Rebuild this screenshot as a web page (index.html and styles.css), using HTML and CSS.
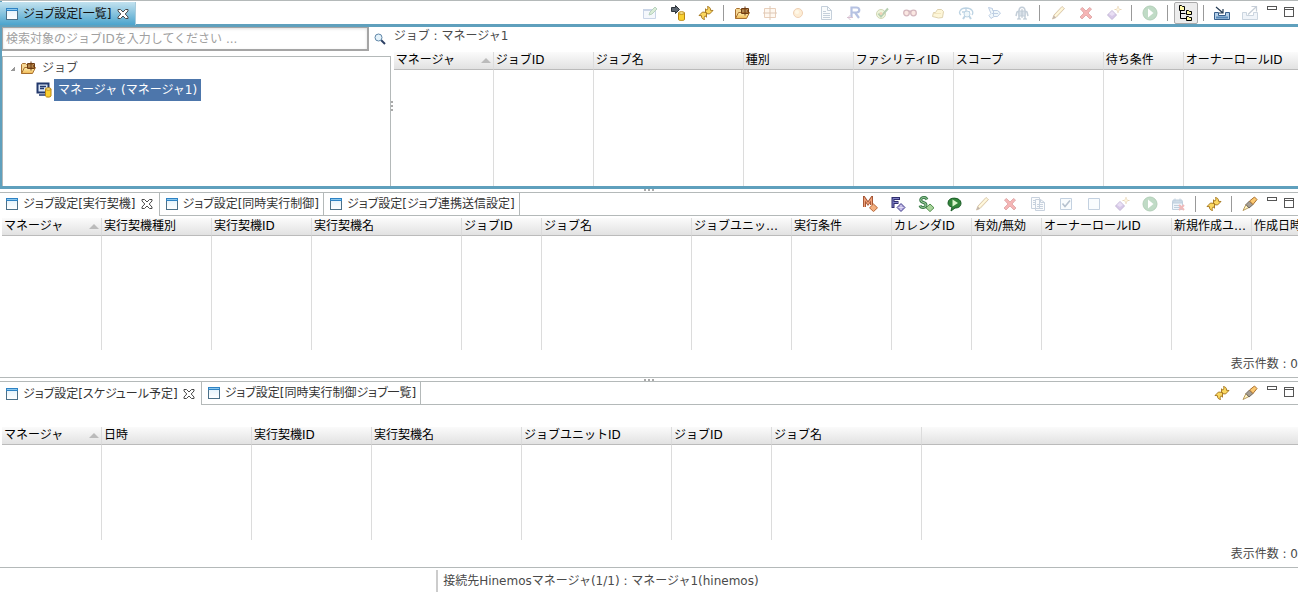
FILE: index.html
```html
<!DOCTYPE html>
<html lang="ja">
<head>
  <meta charset="UTF-8"/>
  <meta name="viewport" content="width=device-width,initial-scale=1.0"/>
  <title>Hinemos ジョブ設定</title>
  <link rel="stylesheet" href="styles.css">
</head>
<body>

  <svg class="sprite" aria-hidden="true">
    <defs>
      <linearGradient id="g-gold" x1="0" y1="0" x2="0" y2="1"><stop offset="0" stop-color="#fff2b8"/><stop offset="1" stop-color="#f0b850"/></linearGradient>
      <linearGradient id="g-win" x1="0" y1="0" x2="0" y2="1"><stop offset="0" stop-color="#dff0fb"/><stop offset="1" stop-color="#fff"/></linearGradient>
    </defs>
    <symbol id="i-window" viewBox="0 0 12 12">
      <rect x=".5" y=".5" width="11" height="11" fill="url(#g-win)" stroke="#4c7088"/>
      <path d="M0 0h12v3H0z" fill="#2f83c4"/><path d="M1 1h10v1H1z" fill="#8cc8ee"/>
    </symbol>
    <symbol id="i-close" viewBox="0 0 12 12">
      <path d="M1 1.5h2.5L6 4l2.5-2.5H11V3L8.2 6 11 9v1.5H8.500L6 8l-2.500 2.500H1V9l2.800-3L1 3z" fill="#fff" stroke="#4a4a4a"/>
    </symbol>
    <symbol id="i-min" viewBox="0 0 12 12"><rect x="1.500" y=".5" width="9" height="3" fill="#fff" stroke="#555"/></symbol>
    <symbol id="i-max" viewBox="0 0 12 12"><rect x="1.500" y="1.500" width="9" height="9" fill="#fff" stroke="#555"/><path d="M1 3.500h10" stroke="#555"/></symbol>
    <symbol id="i-search" viewBox="0 0 12 12">
      <path d="M7 7l4 4" stroke="#2c3f63" stroke-width="2"/><circle cx="4.500" cy="4.500" r="3.500" fill="#e4f2fa" stroke="#5f86a8"/>
    </symbol>
    <symbol id="i-edit-window" viewBox="0 0 16 16">
      <path d="M1.500 4.500h12v9h-12z" fill="#e8f0fa" stroke="#7d99c4"/><path d="M1 4h9v2H1z" fill="#7d99c4"/>
      <path d="M7 10l1-3 5-5 2 2-5 5z" fill="#a6d4a0" stroke="#4f9160"/>
    </symbol>
    <symbol id="i-connect" viewBox="0 0 16 16">
      <path d="M1.500 2.500h4v-2l4 4-4 4v-2h-4z" fill="#5d6670" stroke="#2c333a"/>
      <path d="M8.500 8v6.500c0 1.300 6 1.300 6 0V8z" fill="#f8d030" stroke="#b98610"/><ellipse cx="11.500" cy="8" rx="3" ry="1.300" fill="#fff0a0" stroke="#b98610"/>
    </symbol>
    <symbol id="i-refresh" viewBox="0 0 16 16">
      <path d="M7.500 8.500V3.800L9 5.200C9.800 4.300 10 3 9.500 1.500c2 .3 3.200 1.500 3 3.800l2.500.2-3.500 3.500z" fill="#fbd860" stroke="#a07018" stroke-width=".9"/>
      <path d="M8.500 7.500v4.700L7 10.800c-.8.900-1 2.200-.5 3.700-2-.3-3.200-1.500-3-3.800l-2.500-.2L4.500 7z" fill="#fbd860" stroke="#a07018" stroke-width=".9"/>
    </symbol>
    <symbol id="i-jobunit" viewBox="0 0 16 16">
      <path d="M1.500 13.500V4.500l1-1h3l1 1h7v3" fill="#f6d894" stroke="#a87030"/>
      <path d="M1.500 13.500l3-6h11l-3 6z" fill="url(#g-gold)" stroke="#a87030"/>
      <path d="M7.500 3.500h7v5h-7zM11 1.500v9M7 6h8" fill="none" stroke="#6e3d14"/>
    </symbol>
    <symbol id="i-jobnet" viewBox="0 0 16 16"><path d="M2.500 3.500h11v9h-11z" fill="#fff0dc" stroke="#c88a58"/><path d="M8 1v14M1 8h14" stroke="#b07848"/></symbol>
    <symbol id="i-job" viewBox="0 0 16 16"><circle cx="8" cy="8" r="4.500" fill="#fcd498" stroke="#d88c48"/><circle cx="7" cy="7" r="2" fill="#fff0c8"/></symbol>
    <symbol id="i-filejob" viewBox="0 0 16 16"><path d="M3.500 1.500h6l4 4v9h-10z" fill="#f4f8fc" stroke="#6f8ba8"/><path d="M9.500 1.500v4h4M5 6.500h3M5 8.500h7M5 10.500h7M5 12.500h7" fill="none" stroke="#6f8ba8"/></symbol>
    <symbol id="i-refer" viewBox="0 0 16 16">
      <path d="M5.500 13V2.500h4.800c4 0 4 5 0 5H6M9 7.500l4 5.500" fill="none" stroke="#4c68b8" stroke-width="2.200"/>
      <path d="M1 12.500h6M4.500 10L2 12.500 4.500 15" fill="none" stroke="#a06890"/>
    </symbol>
    <symbol id="i-approval" viewBox="0 0 16 16"><circle cx="7" cy="9" r="4.500" fill="#d8e8a8" stroke="#8e9c48"/><path d="M4.500 8.500l2.500 3 7-8" fill="none" stroke="#4b8a40" stroke-width="2"/><circle cx="7" cy="8.500" r="1.500" fill="#e09050"/></symbol>
    <symbol id="i-monitor" viewBox="0 0 16 16"><circle cx="4.500" cy="8" r="2.800" fill="#f6c8b8" stroke="#985060" stroke-width="1.300"/><circle cx="11.500" cy="8" r="2.800" fill="#f6c8b8" stroke="#985060" stroke-width="1.300"/><path d="M7 6.500h2" stroke="#985060" stroke-width="2"/></symbol>
    <symbol id="i-folderjob" viewBox="0 0 16 16"><path d="M2.500 11.500l1-4h2l2-3h4l2 2-1 6-4 .5z" fill="#fbeaa0" stroke="#b09038"/><path d="M4 8.500h7" stroke="#e0c060"/></symbol>
    <symbol id="i-sendjob" viewBox="0 0 16 16"><path d="M3 10c-3-2-1-7 5-7s8 4 6 7M4 7h8M8 3v5" fill="none" stroke="#5b94bb" stroke-width="1.300"/><circle cx="9" cy="9" r="3" fill="#d8ecf5" stroke="#5b94bb"/><path d="M5 14l2-3M13 14l-2-3" stroke="#5b94bb" stroke-width="2"/></symbol>
    <symbol id="i-recvjob" viewBox="0 0 16 16"><path d="M2.500 2.500l4 1v2h5l3 2.500-3 3.500H8l-3 2-2-3 2-2z" fill="#d9ecf7" stroke="#5b86bb"/><path d="M6 8.500h6M7.500 6v5" stroke="#5b86bb"/></symbol>
    <symbol id="i-rpajob" viewBox="0 0 16 16"><path d="M5 6c0-5 6-5 6 0l2 1 1 4M11 7v7M5 6L3 7l-1 4M5 7v7" fill="none" stroke="#6b86a0" stroke-width="1.500"/><path d="M5 6h6v5H5z" fill="#a5b9cb" stroke="#6b86a0"/><path d="M3 14h4M9 14h4M8 4v9" stroke="#53708c"/></symbol>
    <symbol id="i-pencil" viewBox="0 0 16 16"><path d="M2.500 14l1.500-4 8-8.500 2.500 2-8.500 9z" fill="#fbe088" stroke="#a27838"/><path d="M2.500 14l1.300-3.500 2.200 2z" fill="#694c38"/><path d="M5 11l8-8.500" stroke="#fff4c8"/></symbol>
    <symbol id="i-delete" viewBox="0 0 16 16"><path d="M2.500 4l2-1.500L8 6l3.500-3.500 2 1.500L10 8l4 4-2 2-4-4-4 4-2-2 4-4z" fill="#e84848" stroke="#b83434"/></symbol>
    <symbol id="i-copy-new" viewBox="0 0 16 16"><path d="M6 5.500l4.500 4.500L6 14.500 1.500 10z" fill="#9c78c8" stroke="#6e509c"/><path d="M6 6l3 3-3 2-3-2z" fill="#c9b0e4"/><path d="M12 1v7M8.500 4.500h7" stroke="#c89850"/><path d="M12 2.500l2 2-2 2-2-2z" fill="#fff0b8" stroke="#c89850" stroke-width=".7"/></symbol>
    <symbol id="i-run" viewBox="0 0 16 16"><circle cx="8" cy="8" r="7" fill="#63a873" stroke="#41884f"/><path d="M6 3.500L11.500 8 6 12.500z" fill="#fff"/></symbol>
    <symbol id="i-tree" viewBox="0 0 16 16"><path d="M2.500 4v9.500H8M2.500 8.500h5" fill="none" stroke="#000"/><path d="M1.500.5h2l1 1h2v4h-5zM8.500 5.500h2l1 1h2v3h-5zM8.500 11.500h2l1 1h2v3h-5z" fill="#fff8a8" stroke="#000"/></symbol>
    <symbol id="i-import" viewBox="0 0 16 16"><path d="M.5 7.500h4v3h7v-3h4v7H.5z" fill="#b4cfe8" stroke="#375f8c"/><path d="M2 12.500h12" stroke="#5989b8" stroke-width="2"/><path d="M2 2l7 6M9 4v4H5" fill="none" stroke="#263c54" stroke-width="1.200"/></symbol>
    <symbol id="i-export" viewBox="0 0 16 16"><path d="M.5 7.500h4v3h7v-3h4v7H.5z" fill="#dbe6f2" stroke="#8097b0"/><path d="M6 9.500L14 2M9.500 1.500h5v5" fill="none" stroke="#70859c" stroke-width="1.200"/></symbol>
    <symbol id="i-manual" viewBox="0 0 16 16"><path d="M2.500 11V2.500L6 7.500l3.500-5V9" fill="none" stroke="#9c4c2c" stroke-width="3"/><path d="M2.500 11V2.500L6 7.500l3.500-5V9" fill="none" stroke="#efa078" stroke-width="1.300"/><path d="M11.500 8l4 3.800-4 3.800-4-3.800z" fill="#f3b080" stroke="#b86838"/></symbol>
    <symbol id="i-filecheck" viewBox="0 0 16 16"><path d="M3 12V2.500h7M3 6.500h5.500" fill="none" stroke="#302f6e" stroke-width="3"/><path d="M3 11V2.500h6M3 6.500h5" fill="none" stroke="#8080c8"/><path d="M11 7.500l4 4-4 4-4-4z" fill="#a89cd8" stroke="#4b4890"/><path d="M11 9v5M8.500 11.500h5" stroke="#e0dcf4"/></symbol>
    <symbol id="i-schedule" viewBox="0 0 16 16"><path d="M9 3.500C7-.5 1.500 2 3 5c1 2 5 1 5 4S3 12.500 2 9.500" fill="none" stroke="#3f7f4d" stroke-width="3"/><path d="M9 3.500C7-.5 1.500 2 3 5c1 2 5 1 5 4S3 12.500 2 9.500" fill="none" stroke="#a6d4a4"/><path d="M12 8l4 3.800-4 3.800-4-3.800z" fill="#a9d49c" stroke="#4f8f4b"/></symbol>
    <symbol id="i-linkrecv" viewBox="0 0 16 16"><path d="M2 7c0-7 13-6 13 0 0 4-3 5-6 5l-4 3 1-4C3 10.500 2 9 2 7z" fill="#32863a" stroke="#1c5c28"/><path d="M6.500 3.500L12 7l-5.500 3.500z" fill="#dcf6cc"/></symbol>
    <symbol id="i-copy" viewBox="0 0 16 16"><path d="M1.500 1.500h8v11h-8zM5.500 3.500h5l4 3v8h-9z" fill="#f6f9fc" stroke="#7891ad"/><path d="M10.500 3.500v3h4M7 8.500h6M7 10.500h6M7 12.500h6M3 4.500h2M3 6.500h2M3 8.500h2" fill="none" stroke="#7891ad"/></symbol>
    <symbol id="i-check" viewBox="0 0 16 16"><path d="M2.500 2.500h11v11h-11z" fill="#f2f8fd" stroke="#6c8fb4"/><path d="M4.500 7.500L7 10.500l5-6" fill="none" stroke="#4a6888" stroke-width="1.600"/></symbol>
    <symbol id="i-uncheck" viewBox="0 0 16 16"><path d="M2.500 2.500h11v11h-11z" fill="#f2f8fd" stroke="#6c8fb4"/></symbol>
    <symbol id="i-calendar-x" viewBox="0 0 16 16"><path d="M2.500 5.500h10v8h-10z" fill="#d8e8f4" stroke="#6389ac"/><path d="M3 4h9v3H3zM5 2.500v3M10 2.500v3M4 9.500h7M4 11.500h7" fill="#88acc8" stroke="#6389ac"/><path d="M9 9l5 5M14 9l-5 5" stroke="#dc5454" stroke-width="2"/></symbol>
    <symbol id="i-filter" viewBox="0 0 16 16"><path d="M1 14.500l3-6 3 3z" fill="#fff4c0" stroke="#b89b60"/><path d="M4 8.500L7.500 5 11 8.500 7 12z" fill="#a59e94" stroke="#6e675e"/><path d="M7.500 5l5-4 2.500 2.500-4 5z" fill="#fbc870" stroke="#a87030"/></symbol>
    <symbol id="i-manager" viewBox="0 0 16 16">
      <path d="M1.500 1.500h11v9h-11z" fill="#d8e4f4" stroke="#22386c" stroke-width="2"/><path d="M4 4.500h6M4 6.500h4M3 13h6" stroke="#22386c" stroke-width="1.300"/>
      <path d="M9.500 7v7c0 1.500 5.500 1.500 5.500 0V7z" fill="#fad030" stroke="#bb8510"/><ellipse cx="12.300" cy="7" rx="2.700" ry="1.200" fill="#fff2a0" stroke="#bb8510"/>
    </symbol>
  </svg>

  <main class="workbench">

    <!-- ジョブ設定[一覧] -->
    <section class="view focused">
      <header class="tabbar">
        <div class="tab active">
          <svg class="tab-icon"><use href="#i-window"/></svg>
          <span>ジョブ設定[一覧]</span>
          <button class="tab-close" aria-label="閉じる"><svg><use href="#i-close"/></svg></button>
        </div>
        <div class="toolbar">
          <button class="tool" disabled aria-label="編集モード"><svg><use href="#i-edit-window"/></svg></button>
          <button class="tool" aria-label="接続"><svg><use href="#i-connect"/></svg></button>
          <button class="tool" aria-label="更新"><svg><use href="#i-refresh"/></svg></button>
          <i class="sep"></i>
          <button class="tool" aria-label="ジョブユニットの作成"><svg><use href="#i-jobunit"/></svg></button>
          <button class="tool" disabled aria-label="ジョブネットの作成"><svg><use href="#i-jobnet"/></svg></button>
          <button class="tool" disabled aria-label="コマンドジョブの作成"><svg><use href="#i-job"/></svg></button>
          <button class="tool" disabled aria-label="ファイル転送ジョブの作成"><svg><use href="#i-filejob"/></svg></button>
          <button class="tool" disabled aria-label="参照ジョブの作成"><svg><use href="#i-refer"/></svg></button>
          <button class="tool" disabled aria-label="承認ジョブの作成"><svg><use href="#i-approval"/></svg></button>
          <button class="tool" disabled aria-label="監視ジョブの作成"><svg><use href="#i-monitor"/></svg></button>
          <button class="tool" disabled aria-label="ファイルチェックジョブの作成"><svg><use href="#i-folderjob"/></svg></button>
          <button class="tool" disabled aria-label="連携送信ジョブの作成"><svg><use href="#i-sendjob"/></svg></button>
          <button class="tool" disabled aria-label="連携待機ジョブの作成"><svg><use href="#i-recvjob"/></svg></button>
          <button class="tool" disabled aria-label="RPAジョブの作成"><svg><use href="#i-rpajob"/></svg></button>
          <i class="sep"></i>
          <button class="tool" disabled aria-label="変更"><svg><use href="#i-pencil"/></svg></button>
          <button class="tool" disabled aria-label="削除"><svg><use href="#i-delete"/></svg></button>
          <button class="tool" disabled aria-label="オブジェクト権限"><svg><use href="#i-copy-new"/></svg></button>
          <i class="sep"></i>
          <button class="tool" disabled aria-label="実行"><svg><use href="#i-run"/></svg></button>
          <i class="sep"></i>
          <button class="tool pressed" aria-pressed="true" aria-label="ツリー表示"><svg><use href="#i-tree"/></svg></button>
          <i class="sep"></i>
          <button class="tool" aria-label="インポート"><svg><use href="#i-import"/></svg></button>
          <button class="tool" disabled aria-label="エクスポート"><svg><use href="#i-export"/></svg></button>
        </div>
        <div class="window-btns">
          <button aria-label="最小化"><svg><use href="#i-min"/></svg></button>
          <button aria-label="最大化"><svg><use href="#i-max"/></svg></button>
        </div>
      </header>

      <div class="split">
        <div class="tree-pane">
          <form class="search">
            <input type="text" aria-label="ジョブID" placeholder="検索対象のジョブIDを入力してください ...">
            <button type="button" aria-label="検索"><svg><use href="#i-search"/></svg></button>
          </form>
          <ul class="tree">
            <li>
              <div class="node"><i class="twisty"></i><svg><use href="#i-jobunit"/></svg><span>ジョブ</span></div>
              <ul>
                <li><div class="node selected"><svg><use href="#i-manager"/></svg><span>マネージャ (マネージャ1)</span></div></li>
              </ul>
            </li>
          </ul>
        </div>
        <div class="sash-v"><i class="dots"></i></div>
        <div class="list-pane">
          <p class="path">ジョブ : マネージャ1</p>
          <div class="grid-wrap">
            <table class="grid">
              <colgroup><col class="w100"><col class="w100"><col class="w150"><col class="w110"><col class="w100"><col class="w150"><col class="w80"><col class="w120"></colgroup>
              <thead>
                <tr><th class="sorted"><span>マネージャ</span></th><th>ジョブID</th><th>ジョブ名</th><th>種別</th><th>ファシリティID</th><th>スコープ</th><th>待ち条件</th><th>オーナーロールID</th></tr>
              </thead>
              <tbody>
                <tr><td></td><td></td><td></td><td></td><td></td><td></td><td></td><td></td></tr>
              </tbody>
            </table>
          </div>
        </div>
      </div>
    </section>

    <div class="sash-h"><i class="dots"></i></div>

    <!-- ジョブ設定[実行契機] -->
    <section class="view">
      <header class="tabbar">
        <div class="tab active">
          <svg class="tab-icon"><use href="#i-window"/></svg>
          <span>ジョブ設定[実行契機]</span>
          <button class="tab-close" aria-label="閉じる"><svg><use href="#i-close"/></svg></button>
        </div>
        <div class="tab"><svg class="tab-icon"><use href="#i-window"/></svg><span>ジョブ設定[同時実行制御]</span></div>
        <div class="tab"><svg class="tab-icon"><use href="#i-window"/></svg><span>ジョブ設定[ジョブ連携送信設定]</span></div>
        <div class="toolbar">
          <button class="tool" aria-label="マニュアル実行契機の作成"><svg><use href="#i-manual"/></svg></button>
          <button class="tool" aria-label="ファイルチェックの作成"><svg><use href="#i-filecheck"/></svg></button>
          <button class="tool" aria-label="スケジュールの作成"><svg><use href="#i-schedule"/></svg></button>
          <button class="tool" aria-label="ジョブ連携受信の作成"><svg><use href="#i-linkrecv"/></svg></button>
          <button class="tool" disabled aria-label="変更"><svg><use href="#i-pencil"/></svg></button>
          <button class="tool" disabled aria-label="削除"><svg><use href="#i-delete"/></svg></button>
          <button class="tool" disabled aria-label="コピー"><svg><use href="#i-copy"/></svg></button>
          <button class="tool" disabled aria-label="有効"><svg><use href="#i-check"/></svg></button>
          <button class="tool" disabled aria-label="無効"><svg><use href="#i-uncheck"/></svg></button>
          <button class="tool" disabled aria-label="オブジェクト権限"><svg><use href="#i-copy-new"/></svg></button>
          <button class="tool" disabled aria-label="実行"><svg><use href="#i-run"/></svg></button>
          <button class="tool" disabled aria-label="事前生成の解除"><svg><use href="#i-calendar-x"/></svg></button>
          <i class="sep"></i>
          <button class="tool" aria-label="更新"><svg><use href="#i-refresh"/></svg></button>
          <i class="sep"></i>
          <button class="tool" aria-label="フィルタ"><svg><use href="#i-filter"/></svg></button>
        </div>
        <div class="window-btns">
          <button aria-label="最小化"><svg><use href="#i-min"/></svg></button>
          <button aria-label="最大化"><svg><use href="#i-max"/></svg></button>
        </div>
      </header>
      <div class="grid-wrap padded">
        <table class="grid">
          <colgroup><col class="w100"><col class="w110"><col class="w100"><col class="w150"><col class="w80"><col class="w150"><col class="w100"><col class="w100"><col class="w80"><col class="w70"><col class="w130"><col class="w80"><col class="w120"></colgroup>
          <thead>
            <tr><th class="sorted"><span>マネージャ</span></th><th>実行契機種別</th><th>実行契機ID</th><th>実行契機名</th><th>ジョブID</th><th>ジョブ名</th><th>ジョブユニットID</th><th>実行条件</th><th>カレンダID</th><th>有効/無効</th><th>オーナーロールID</th><th>新規作成ユーザ</th><th>作成日時</th></tr>
          </thead>
          <tbody>
            <tr><td></td><td></td><td></td><td></td><td></td><td></td><td></td><td></td><td></td><td></td><td></td><td></td><td></td></tr>
          </tbody>
        </table>
      </div>
      <p class="count">表示件数 : 0</p>
    </section>

    <div class="sash-h lined"><i class="dots"></i></div>

    <!-- ジョブ設定[スケジュール予定] -->
    <section class="view">
      <header class="tabbar">
        <div class="tab active">
          <svg class="tab-icon"><use href="#i-window"/></svg>
          <span>ジョブ設定[スケジュール予定]</span>
          <button class="tab-close" aria-label="閉じる"><svg><use href="#i-close"/></svg></button>
        </div>
        <div class="tab"><svg class="tab-icon"><use href="#i-window"/></svg><span>ジョブ設定[同時実行制御ジョブ一覧]</span></div>
        <div class="toolbar">
          <button class="tool" aria-label="更新"><svg><use href="#i-refresh"/></svg></button>
          <button class="tool" aria-label="フィルタ"><svg><use href="#i-filter"/></svg></button>
        </div>
        <div class="window-btns">
          <button aria-label="最小化"><svg><use href="#i-min"/></svg></button>
          <button aria-label="最大化"><svg><use href="#i-max"/></svg></button>
        </div>
      </header>
      <div class="filter-label"></div>
      <div class="grid-wrap padded">
        <table class="grid">
          <colgroup><col class="w100"><col class="w150"><col class="w120"><col class="w150"><col class="w150"><col class="w100"><col class="w150"><col></colgroup>
          <thead>
            <tr><th class="sorted"><span>マネージャ</span></th><th>日時</th><th>実行契機ID</th><th>実行契機名</th><th>ジョブユニットID</th><th>ジョブID</th><th>ジョブ名</th><th></th></tr>
          </thead>
          <tbody>
            <tr><td></td><td></td><td></td><td></td><td></td><td></td><td></td><td></td></tr>
          </tbody>
        </table>
      </div>
      <p class="count">表示件数 : 0</p>
    </section>

    <footer class="statusbar"><span>接続先Hinemosマネージャ(1/1) : マネージャ1(hinemos)</span></footer>

  </main>

</body>
</html>
```

FILE: styles.css
```css
:root {
  --fg:      #4a4a4a;
  --head:    #000000;
  --line:    #b4b9b9;
  --cell:    #dcdcdc;
  --accent:  #5fa0bd;
  --select:  #4d76ab;
}
*,*::before,*::after { box-sizing:border-box; margin:0; padding:0 }
body {
  background: #fff;
  color: var(--fg);
  font-family: "DejaVu Sans", "Noto Sans CJK JP", sans-serif;
  font-size: 12px;
  line-height: 18px;
  overflow: hidden;
}
button {
  background:none; border:none;
  font:inherit; cursor:pointer;
}
svg { display:block; flex:none; }
ul { list-style:none; }
.sprite { position:absolute; width:0; height:0; }

.workbench {
  display: flex;
  flex-direction: column;
  height: 100vh;
}
.view {
  flex: 1 1 0;
  min-height: 0;
  display: flex;
  flex-direction: column;
}
.view.focused {
  border-left: 2px solid var(--accent);
  border-bottom: 3px solid var(--accent);
}

/* tabs and toolbar */
.tabbar {
  flex: none;
  display: flex;
  height: 24px;
  border-top: 1px solid var(--line);
  border-bottom: 1px solid var(--line);
}
.tab {
  display: flex;
  align-items: center;
  gap: 5px;
  padding: 0 4px 0 6px;
  border-right: 1px solid var(--line);
  white-space: nowrap;
  color: #333;
  font-feature-settings: "palt";
}
.tab.active {
  margin-bottom: -1px;
  padding-right: 6px;
  background: #fff;
}
.tab-icon { width:12px; height:12px; }
.tab-close { padding:0; }
.tab-close svg { width:12px; height:12px; }
.focused .tabbar {
  height: 27px;
  margin-left: -2px;
  padding-top: 1px;
  border-bottom: 3px solid var(--accent);
}
.focused .tab.active {
  border-right: 1px solid #a8cbdb;
  background: linear-gradient(180deg, #c3e2ef, #4ba4cd);
  color: #111;
}
.toolbar {
  display: flex;
  align-items: center;
  margin-left: auto;
}
.tool {
  display: flex;
  align-items: center;
  justify-content: center;
  width: 24px;
  height: 22px;
  margin: 0 2px;
}
.tool svg { width:16px; height:16px; }
.tool:disabled { opacity:.4; cursor:default; }
.tool.pressed {
  border: 1px solid #aaa;
  border-radius: 2px;
  background: #ececec;
}
.sep {
  width: 1px;
  height: 16px;
  margin: 0 4px 0 3px;
  background: #999;
}
.window-btns { display:flex; align-items:flex-start; }
.window-btns button { width:17px; padding:4px 2px; }
.window-btns svg { width:12px; height:12px; }

/* sashes */
.sash-h, .sash-v {
  flex: none;
  display: flex;
  align-items: center;
  justify-content: center;
}
.sash-h { height:3px; }
.sash-h.lined { height:4px; border-top:1px solid var(--line); }
.sash-v { width:3px; }
.dots {
  width: 10px;
  height: 2px;
  background: repeating-linear-gradient(90deg, #aaa 0 2px, transparent 2px 4px);
}
.sash-v .dots {
  width: 2px;
  height: 10px;
  background: repeating-linear-gradient(180deg, #aaa 0 2px, transparent 2px 4px);
}

/* job tree */
.split { flex:1; display:flex; min-height:0; }
.tree-pane {
  width: 30%;
  display: flex;
  flex-direction: column;
}
.search { display:flex; align-items:center; height:24px; }
.search input {
  flex: 1;
  min-width: 0;
  height: 24px;
  padding: 0 3px;
  border: 1px solid #a5a5a5;
  border-bottom-width: 2px;
  border-right-width: 2px;
  box-shadow: inset 0 1px 3px #ddd;
  font: inherit;
}
.search input::placeholder { color:#a0a0a0; }
.search button { padding:0 5px; }
.search svg { width:12px; height:12px; }
.tree {
  flex: 1;
  margin-top: 5px;
  border: 1px solid var(--line);
  border-bottom: none;
}
.node {
  display: flex;
  align-items: center;
  gap: 2px;
  height: 22px;
  padding-left: 5px;
}
.node svg { width:16px; height:16px; }
.node span { padding:2px 4px; }
.tree ul .node { padding-left:33px; }
.node.selected span { background:var(--select); color:#fff; }
.twisty {
  width: 10px;
  height: 5px;
  background: linear-gradient(135deg, transparent 50%, #999 50%) 2px 0 / 5px 5px no-repeat;
}

/* tables */
.list-pane {
  flex: 1;
  min-width: 0;
  display: flex;
  flex-direction: column;
}
.path { padding-bottom:7px; }
.grid-wrap { flex:1; min-height:0; overflow:hidden; }
.grid-wrap.padded { padding:2px 0 0 2px; }
.grid {
  width: 100%;
  height: 100%;
  table-layout: fixed;
  border-collapse: separate;
  border-spacing: 0;
}
.grid th {
  height: 18px;
  padding: 0 2px;
  border-right: 1px solid var(--cell);
  border-bottom: 1px solid #bbb;
  background: linear-gradient(180deg, #fbfbfb, #e2e2e2);
  color: var(--head);
  font-weight: normal;
  line-height: 17px;
  text-align: left;
  white-space: nowrap;
  overflow: hidden;
  text-overflow: ellipsis;
}
.grid td { border-right:1px solid var(--cell); }
.grid th:last-child, .grid td:last-child { border-right:none; }
.grid .sorted span { display:flex; align-items:center; justify-content:space-between; }
.grid .sorted span::after {
  content: "";
  border: 5px solid transparent;
  border-top: none;
  border-bottom-color: #bbb;
}
.w70 { width:70px } .w80 { width:80px } .w100 { width:100px }
.w110 { width:110px } .w120 { width:120px } .w130 { width:130px } .w150 { width:150px }
.filter-label { flex:none; height:20px; }
.count { flex:none; padding:5px 0 4px; text-align:right; }

.statusbar {
  flex: none;
  height: 25px;
  padding-top: 2px;
  border-top: 1px solid var(--line);
}
.statusbar span {
  display: block;
  height: 22px;
  margin-left: 33.6%;
  padding-left: 5px;
  border-left: 2px solid #ccc;
  line-height: 22px;
}
```
